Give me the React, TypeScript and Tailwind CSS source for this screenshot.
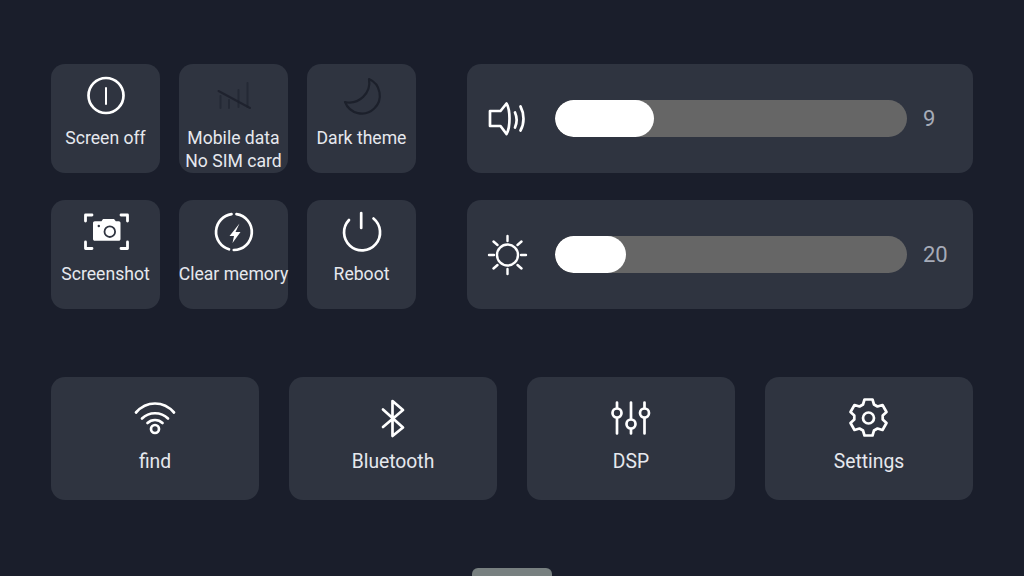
import React from "react";

const Tile = ({ icon, label, sub }: { icon: React.ReactNode; label: string; sub?: string }) => (
  <div className="flex h-[109px] w-[109px] flex-col items-center rounded-[14px] bg-[#2f3440] pt-[12px]">
    <div className="h-[40px] w-[40px] shrink-0">{icon}</div>
    <div className="mt-[11px] whitespace-nowrap text-center text-[17.6px] leading-[23px] text-[#e6e8ee]">
      {label}
      {sub && <div>{sub}</div>}
    </div>
  </div>
);

const Wide = ({ icon, label }: { icon: React.ReactNode; label: string }) => (
  <div className="flex h-[123px] w-[208px] flex-col items-center rounded-[14px] bg-[#2f3440] pt-[21px]">
    <div className="h-[40px] w-[40px] shrink-0">{icon}</div>
    <div className="mt-[12px] text-[19.3px] leading-[24px] text-[#e6e8ee]">{label}</div>
  </div>
);

const Slider = ({ icon, fill, value }: { icon: React.ReactNode; fill: number; value: string }) => (
  <div className="flex h-[109px] w-[506px] items-center rounded-[14px] bg-[#2f3440] pl-[21px]">
    <div className="h-[40px] w-[40px] shrink-0">{icon}</div>
    <div className="ml-[27px] h-[37px] w-[352px] shrink-0 overflow-hidden rounded-[18.5px] bg-[#666666]">
      <div className="h-full rounded-[18.5px] bg-white" style={{ width: fill }} />
    </div>
    <div className="ml-[16px] text-[22px] leading-[28px] text-[#a6abb8]">{value}</div>
  </div>
);

const S = ({ children, w = 2.7, c = "#ffffff" }: { children: React.ReactNode; w?: number; c?: string }) => (
  <svg viewBox="0 0 40 40" width="40" height="40" fill="none" stroke={c} strokeWidth={w} strokeLinecap="round" strokeLinejoin="round" className="overflow-visible">
    {children}
  </svg>
);

const dark = "#1c202b";

export default function App() {
  return (
    <div className="flex h-[576px] w-[1024px] flex-col overflow-hidden bg-[#1a1e2b] pl-[51px] pt-[64px] font-['Roboto',sans-serif]">
      <div className="flex gap-[51px]">
        <div className="flex w-[365px] flex-wrap gap-x-[19px] gap-y-[27px]">
          <Tile label="Screen off" icon={<S><circle cx="20" cy="19.500" r="17.500" /><path d="M20 12v16" strokeWidth="2" /></S>} />
          <Tile
            label="Mobile data"
            sub="No SIM card"
            icon={
              <S c={dark} w={2}>
                <path d="M6.500 20v12M15 24v8M24.500 14v17M33.500 7v24" opacity="0.55" />
                <path d="M4.500 15 36 32" opacity="0.85" />
              </S>
            }
          />
          <Tile
            label="Dark theme"
            icon={<S c={dark} w={2.2}><path d="M27 3A18 18 0 1 1 3 26 A20 20 0 0 0 27 3Z" /></S>}
          />
          <Tile
            label="Screenshot"
            icon={
              <S w={2.8}>
                <path d="M-.5 9V3H6M35 3h6.500V9M-.5 30v6.500H6M41.500 30v6.500H35" />
                <path fill="#fff" stroke="none" d="M7 11c0-1 .8-1.800 1.800-1.800H15.500L17 7h11l1.800 2.200h3c1 0 1.700.8 1.700 1.800V27c0 1-.7 1.800-1.700 1.800H8.800C7.800 28.800 7 28 7 27Z" />
                <circle cx="23.800" cy="19.700" r="5.300" stroke="#2f3440" strokeWidth="1.800" fill="#fff" />
                <circle cx="12.800" cy="14" r="1.200" fill="#2f3440" stroke="none" />
              </S>
            }
          />
          <Tile
            label="Clear memory"
            icon={
              <S>
                <path d="M22.500 2.200A18 18 0 0 1 19.800 38M15 37.300A18 18 0 0 1 17.500 2.200" />
                <path fill="#fff" stroke="none" d="M25.500 11.500 15.500 24h4.500L18.500 31 26.500 20h-5Z" />
              </S>
            }
          />
          <Tile label="Reboot" icon={<S><path d="M7 8A18 18 0 1 0 31.500 6.500" /><path d="M19.200 1v15" /></S>} />
        </div>
        <div className="flex flex-col gap-[27px]">
          <Slider
            fill={99}
            value="9"
            icon={
              <S>
                <path d="M2 12h10.500L18.500 4.500c2.500 4 3 9 3 15s-.5 11.500-3 15.500L12.500 27H2Z" />
                <path d="M27 13.500c2 4.500 2 10.500 0 15M32.500 7.500c4 7.500 4 17 0 24" />
              </S>
            }
          />
          <Slider
            fill={71}
            value="20"
            icon={
              <S w={2.4}>
                <circle cx="19.500" cy="20" r="10.500" />
                <path d="M19.500 1v5M19.500 34v5M1 20h5M33 20h5M5.500 6.500 9.500 10M29.500 30l4 3.500M5.500 33.500l4-3.500M29.500 10l4-3.500" />
              </S>
            }
          />
        </div>
      </div>
      <div className="mt-[68px] flex gap-[30px]">
        <Wide
          label="find"
          icon={
            <S>
              <circle cx="20" cy="31" r="4" />
              <path d="M12.500 25c4-4 11-4 15 0M7 20.500c7-7 19-7 26 0M1 14.500c10.500-12 27.500-12 38 0" />
            </S>
          }
        />
        <Wide label="Bluetooth" icon={<S><path d="M10 11.500 30 29.500 19.500 38V3L30 12 10 29" /></S>} />
        <Wide
          label="DSP"
          icon={
            <S>
              <path d="M6 4.500V10M6 20v15.500M20 4.500V21M20 31v4.500M33.500 4.500V10M33.500 20v15.500" />
              <circle cx="6" cy="15" r="4.500" />
              <circle cx="20" cy="26" r="4.500" />
              <circle cx="33.500" cy="15" r="4.500" />
            </S>
          }
        />
        <Wide
          label="Settings"
          icon={
            <S>
              <path d="M15.500 1.500h8l1.500 5 3.500 2 5-1.500 4 7-3.800 3.500v4l3.800 3.500-4 7-5-1.500-3.500 2-1.500 5h-8l-1.500-5-3.500-2-5 1.500-4-7 3.800-3.500v-4L1.500 14l4-7 5 1.500 3.500-2Z" />
              <circle cx="19.500" cy="20" r="5.500" />
            </S>
          }
        />
      </div>
      <div className="ml-[421px] mt-[68px] h-[8px] w-[80px] shrink-0 rounded-t-[6px] bg-[#788080]" />
    </div>
  );
}
